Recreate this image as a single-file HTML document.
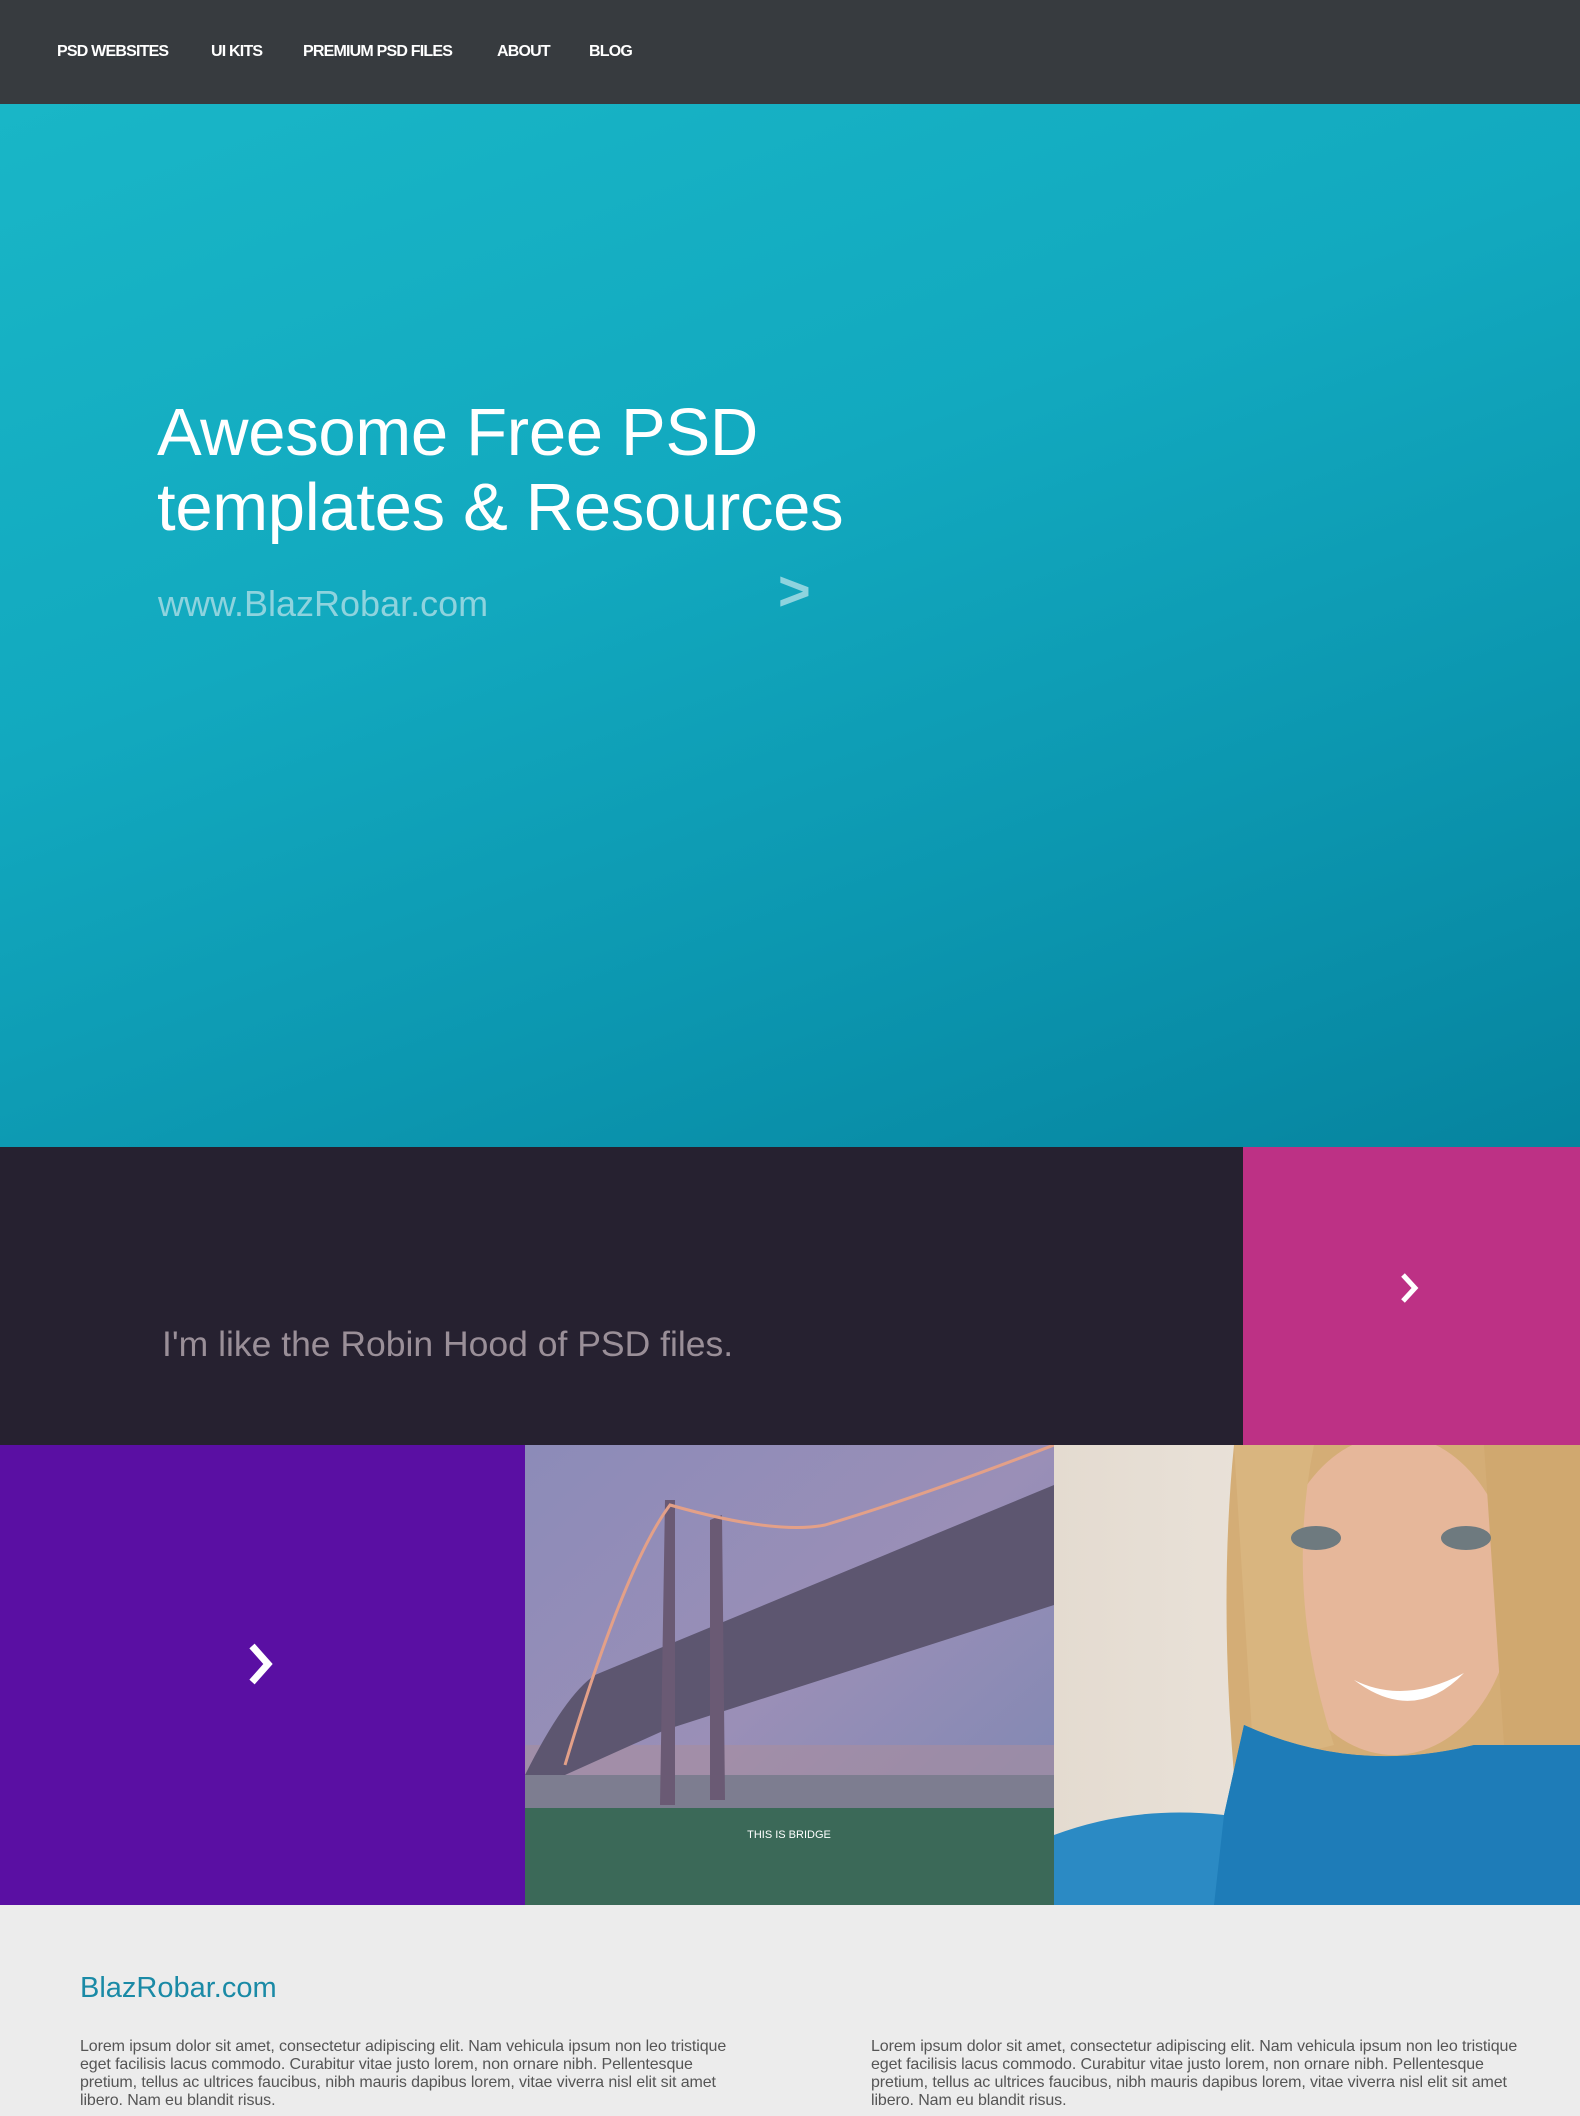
<!DOCTYPE html>
<html><head><meta charset="utf-8"><style>
*{margin:0;padding:0;box-sizing:border-box}
body{width:1580px;height:2116px;overflow:hidden;font-family:"Liberation Sans",Arial,sans-serif;background:#ececec;position:relative}
.abs{position:absolute}
nav{position:absolute;left:0;top:0;width:1580px;height:104px;background:#373b3f}
nav span{position:absolute;top:43px;color:#fff;font-weight:bold;font-size:16px;letter-spacing:-0.8px}
.hero{left:0;top:104px;width:1580px;height:1043px;background:linear-gradient(160deg,#19b6c7 0%,#12a9bf 40%,#0c97b0 70%,#06849f 100%)}
h1{position:absolute;left:157px;top:395px;color:#fff;font-weight:normal;font-size:67px;line-height:75px;letter-spacing:-0.3px}
.sub{left:158px;top:583px;color:#8ed3de;font-size:36px}
.arr{left:778px;top:558px;color:#8ed3de;font-size:56px;font-weight:bold}
.band{left:0;top:1147px;width:1243px;height:298px;background:#262130}
.band p{position:absolute;left:162px;top:177px;color:#9a8f98;font-size:35.5px}
.pink{left:1243px;top:1147px;width:337px;height:298px;background:#bd3185}
.purple{left:0;top:1445px;width:525px;height:460px;background:#5a0fa3}
.foot h2{position:absolute;left:80px;top:1972px;color:#1a8aa6;font-weight:normal;font-size:29px}
.para{position:absolute;top:2038px;color:#555;font-size:16px;line-height:18px;white-space:nowrap;letter-spacing:-0.1px}
</style></head><body>
<nav><span style="left:57px">PSD WEBSITES</span><span style="left:211px">UI KITS</span><span style="left:303px">PREMIUM PSD FILES</span><span style="left:497px">ABOUT</span><span style="left:589px">BLOG</span></nav>
<div class="abs hero"></div>
<h1>Awesome Free PSD<br>templates &amp; Resources</h1>
<div class="abs sub">www.BlazRobar.com</div>
<div class="abs arr">&gt;</div>
<div class="abs band"><p>I'm like the Robin Hood of PSD files.</p></div>
<div class="abs pink"><svg class="abs" style="left:156px;top:124px" width="22" height="34" viewBox="0 0 22 34"><path d="M4 4 L16 17 L4 30" stroke="#fff" stroke-width="5" fill="none"/></svg></div>
<div class="abs purple"><svg class="abs" style="left:246px;top:196px" width="30" height="46" viewBox="0 0 30 46"><path d="M6 5 L22 23 L6 41" stroke="#fff" stroke-width="7" fill="none"/></svg></div>
<svg class="abs" style="left:525px;top:1445px" width="529" height="460" viewBox="0 0 529 460">
<defs><linearGradient id="sky" x1="0" y1="0" x2="1" y2="1"><stop offset="0" stop-color="#8c8bb8"/><stop offset="0.5" stop-color="#9a8fb7"/><stop offset="1" stop-color="#7a86b2"/></linearGradient></defs>
<rect width="529" height="460" fill="url(#sky)"/>
<rect y="300" width="529" height="30" fill="#a98e9f" opacity="0.6"/>
<rect y="330" width="529" height="35" fill="#7d7d90"/>
<path d="M0 330 Q40 250 70 230 L529 40 L529 160 L140 285 L40 330Z" fill="#5d5670"/>
<path d="M140 55 L150 55 L150 360 L135 360Z M185 75 L197 70 L200 355 L185 355Z" fill="#6a5a74"/>
<path d="M40 320 Q100 120 145 60 Q250 90 300 80 Q400 50 529 0" stroke="#e3a088" stroke-width="3" fill="none"/>
<rect y="363" width="529" height="97" fill="#3b6958"/>
<text x="264" y="393" text-anchor="middle" fill="#fff" font-size="11" font-family="Liberation Sans,sans-serif">THIS IS BRIDGE</text>
</svg>
<svg class="abs" style="left:1054px;top:1445px" width="526" height="460" viewBox="0 0 526 460">
<defs><linearGradient id="bg" x1="0" x2="1"><stop offset="0" stop-color="#e4dbd0"/><stop offset="1" stop-color="#f1ece6"/></linearGradient></defs>
<rect width="526" height="460" fill="url(#bg)"/>
<path d="M180 0 L526 0 L526 330 L180 330 Q165 150 180 0Z" fill="#d4ad76"/>
<ellipse cx="340" cy="150" rx="120" ry="160" fill="#e6b79a"/>
<path d="M180 0 L260 0 Q230 150 280 300 L200 320Z" fill="#d9b57f"/>
<path d="M430 0 L526 0 L526 330 L450 300Z" fill="#d0a86f"/>
<ellipse cx="262" cy="93" rx="25" ry="12" fill="#6e7a7f"/>
<ellipse cx="412" cy="93" rx="25" ry="12" fill="#6e7a7f"/>
<path d="M300 235 Q350 260 410 228 Q360 280 300 235Z" fill="#fff"/>
<path d="M0 390 Q80 360 170 370 L190 280 Q300 330 420 300 L526 300 L526 460 L0 460Z" fill="#2b8ac4"/>
<path d="M170 370 L190 280 Q300 330 420 300 L526 300 L526 460 L160 460Z" fill="#1e7cb8"/>
</svg>
<div class="foot"><h2>BlazRobar.com</h2></div>
<div class="para" style="left:80px">Lorem ipsum dolor sit amet, consectetur adipiscing elit. Nam vehicula ipsum non leo tristique<br>eget facilisis lacus commodo. Curabitur vitae justo lorem, non ornare nibh. Pellentesque<br>pretium, tellus ac ultrices faucibus, nibh mauris dapibus lorem, vitae viverra nisl elit sit amet<br>libero. Nam eu blandit risus.</div>
<div class="para" style="left:871px">Lorem ipsum dolor sit amet, consectetur adipiscing elit. Nam vehicula ipsum non leo tristique<br>eget facilisis lacus commodo. Curabitur vitae justo lorem, non ornare nibh. Pellentesque<br>pretium, tellus ac ultrices faucibus, nibh mauris dapibus lorem, vitae viverra nisl elit sit amet<br>libero. Nam eu blandit risus.</div>
</body></html>
